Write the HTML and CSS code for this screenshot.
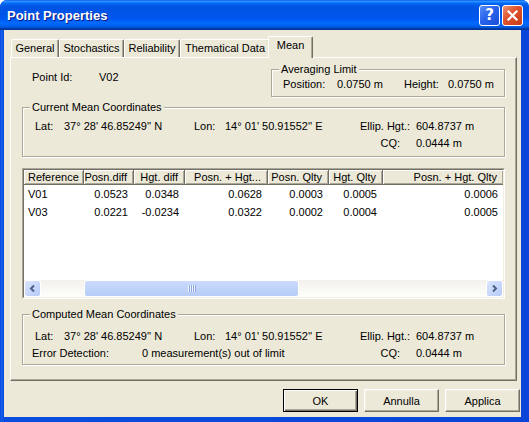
FILE: index.html
```html
<!DOCTYPE html>
<html>
<head>
<meta charset="utf-8">
<title>Point Properties</title>
<link rel="stylesheet" href="styles.css">
</head>
<body>
<div class="window">
  <div class="titlebar">
    <span class="title">Point Properties</span>
    <div class="tbtns">
      <span class="tbtn help">?</span>
      <span class="tbtn close"><svg width="13" height="13" viewBox="0 0 13 13"><path d="M2.5 2.5 L10.5 10.5 M10.5 2.5 L2.5 10.5" stroke="#fff" stroke-width="2.2" stroke-linecap="square"/></svg></span>
    </div>
  </div>
  <div class="client">
    <div class="tabs">
      <div class="tab t-general">General</div>
      <div class="tab t-stoch">Stochastics</div>
      <div class="tab t-rel">Reliability</div>
      <div class="tab t-them">Thematical Data</div>
      <div class="tab active t-mean">Mean</div>
    </div>
    <div class="panel">
      <div class="row1">
        <div class="pointid"><span class="pid-lbl">Point Id:</span><span>V02</span></div>
        <fieldset class="group avg">
          <legend>Averaging Limit</legend>
          <div class="avg-grid"><span>Position:</span><span>0.0750 m</span><span>Height:</span><span>0.0750 m</span></div>
        </fieldset>
      </div>
      <fieldset class="group coords cur">
        <legend>Current Mean Coordinates</legend>
        <div class="rows">
          <div class="crow"><span>Lat:</span><span>37° 28' 46.85249'' N</span><span>Lon:</span><span>14° 01' 50.91552'' E</span><span class="rl">Ellip. Hgt.:</span><span>604.8737 m</span></div>
          <div class="crow"><span class="span4"></span><span class="rl">CQ:</span><span>0.0444 m</span></div>
        </div>
      </fieldset>
      <div class="list">
        <div class="list-inner">
          <div class="lv-head">
            <span>Reference</span><span>Posn.diff</span><span>Hgt. diff</span><span>Posn. + Hgt...</span><span>Posn. Qlty</span><span>Hgt. Qlty</span><span>Posn. + Hgt. Qlty</span>
          </div>
          <div class="lv-body">
            <div class="lv-row"><span>V01</span><span>0.0523</span><span>0.0348</span><span>0.0628</span><span>0.0003</span><span>0.0005</span><span>0.0006</span></div>
            <div class="lv-row"><span>V03</span><span>0.0221</span><span>-0.0234</span><span>0.0322</span><span>0.0002</span><span>0.0004</span><span>0.0005</span></div>
          </div>
          <div class="hscroll">
            <span class="sb-btn"><svg width="9" height="9" viewBox="0 0 9 9"><path d="M6 1.5 L3 4.5 L6 7.5" fill="none" stroke="#4d6185" stroke-width="2"/></svg></span>
            <div class="sb-track"><div class="sb-thumb"><span class="grip"></span></div></div>
            <span class="sb-btn"><svg width="9" height="9" viewBox="0 0 9 9"><path d="M3 1.5 L6 4.5 L3 7.5" fill="none" stroke="#4d6185" stroke-width="2"/></svg></span>
          </div>
        </div>
      </div>
      <fieldset class="group coords comp">
        <legend>Computed Mean Coordinates</legend>
        <div class="rows">
          <div class="crow"><span>Lat:</span><span>37° 28' 46.85249'' N</span><span>Lon:</span><span>14° 01' 50.91552'' E</span><span class="rl">Ellip. Hgt.:</span><span>604.8737 m</span></div>
          <div class="crow"><span class="span4 err"><span class="err-lbl">Error Detection:</span><span>0 measurement(s) out of limit</span></span><span class="rl">CQ:</span><span>0.0444 m</span></div>
        </div>
      </fieldset>
    </div>
    <div class="buttons">
      <button class="btn default">OK</button>
      <button class="btn">Annulla</button>
      <button class="btn">Applica</button>
    </div>
  </div>
</div>
</body>
</html>
```

FILE: styles.css
```css
* { box-sizing: border-box; }
html, body { margin: 0; padding: 0; }
body {
  width: 529px;
  height: 422px;
  overflow: hidden;
  background: #ffffff;
  font-family: "Liberation Sans", Arial, sans-serif;
  font-size: 11px;
  color: #000;
}
.window {
  width: 529px;
  height: 422px;
  display: flex;
  flex-direction: column;
  background: linear-gradient(to right, #0831d9 0, #166aee 1px, #0a4ddf 3px, #0845d8 100%);
  border-radius: 7px 7px 0 0;
  overflow: hidden;
}
.titlebar {
  height: 30px;
  flex: none;
  display: flex;
  align-items: center;
  padding-left: 7px;
  background: linear-gradient(#0058ee 0%, #3593ff 4%, #288eff 6%, #127dff 8%, #036ffc 10%, #0262ee 14%, #0057e5 20%, #0054e3 24%, #0055eb 56%, #005bf5 66%, #026afe 76%, #0062ef 86%, #0052d6 92%, #0040ab 94%, #003092 100%);
}
.title {
  font-family: "Liberation Sans", Arial, sans-serif;
  font-weight: bold;
  font-size: 13px;
  color: #fff;
  text-shadow: 1px 1px 0 #0a1883;
  margin-top: 1px;
}
.tbtns {
  margin-left: auto;
  margin-right: 6px;
  display: flex;
  gap: 2px;
}
.tbtn {
  width: 21px;
  height: 21px;
  border: 1px solid #fff;
  border-radius: 3px;
  display: flex;
  align-items: center;
  justify-content: center;
  color: #fff;
}
.help {
  background: linear-gradient(135deg, #5a8df7 0%, #2863ec 45%, #1a4fd8 100%);
  font-family: "DejaVu Sans", sans-serif;
  font-weight: bold;
  font-size: 15px;
  line-height: 19px;
}
.close {
  background: linear-gradient(135deg, #f0937a 0%, #e0552f 40%, #c63c18 100%);
}
.client {
  flex: 1;
  margin: 0 8px 5px 4px;
  background: #ece9d8;
  padding: 6px 4px 0 6px;
  display: flex;
  flex-direction: column;
}
.tabs {
  display: flex;
  align-items: flex-end;
  height: 21px;
  padding-left: 1px;
  position: relative;
  z-index: 1;
}
.tab {
  height: 18px;
  line-height: 16px;
  text-align: center;
  white-space: nowrap;
  border-top: 1px solid #fff;
  border-left: 1px solid #fff;
  border-right: 1px solid #716f64;
  box-shadow: inset -1px 0 0 #aca899;
  border-radius: 2px 2px 0 0;
  background: #ece9d8;
}
.t-general { width: 48px; }
.t-stoch { width: 65px; }
.t-rel { width: 56px; }
.t-them { width: 90px; }
.tab.active {
  width: 45px;
  height: 22px;
  margin: 0 -2px -1px -2px;
  line-height: 17px;
}
.panel {
  border-top: 1px solid #fff;
  border-left: 1px solid #fff;
  border-right: 1px solid #716f64;
  border-bottom: 1px solid #716f64;
  box-shadow: inset -1px -1px 0 #aca899;
  padding: 5px 11px 15px 11px;
  display: flex;
  flex-direction: column;
}
.row1 {
  display: flex;
  align-items: flex-start;
}
.pointid {
  margin: 8px 0 0 10px;
  display: flex;
  line-height: 13px;
}
.pid-lbl { width: 67px; }
.group {
  border: 1px solid #aca899;
  box-shadow: inset 1px 1px 0 #fff, 1px 1px 0 #fff;
  margin: 0;
  padding: 0;
  min-width: 0;
}
.group legend {
  margin-left: 7px;
  padding: 0 2px;
  line-height: 13px;
  background: #ece9d8;
}
.group.avg {
  margin-left: auto;
  width: 234px;
}
.avg-grid {
  display: grid;
  grid-template-columns: 54px 67px 44px auto;
  padding: 2px 0 5px 11px;
  line-height: 13px;
  white-space: nowrap;
}
.group.cur { margin-top: 4px; }
.cur .rows { padding: 6px 0 6px 12px; }
.group.comp { margin-top: 9px; }
.comp .rows { padding: 9px 0 4px 12px; }
.crow {
  display: grid;
  grid-template-columns: 29px 130px 31px 135px 56px auto;
  line-height: 13px;
  white-space: nowrap;
}
.crow + .crow { margin-top: 4px; }
.span4 { grid-column: 1 / 5; }
.rl { text-align: right; padding-right: 16px; }
.err { display: flex; margin-left: -3px; }
.err-lbl { width: 110px; }
.list {
  margin-top: 11px;
  height: 131px;
  border: 1px solid;
  border-color: #aca899 #fff #fff #aca899;
}
.list-inner {
  height: 100%;
  border: 1px solid;
  border-color: #716f64 #f1efe2 #f1efe2 #716f64;
  background: #fff;
  display: flex;
  flex-direction: column;
  overflow: hidden;
}
.lv-head, .lv-row {
  display: grid;
  grid-template-columns: 60px 50px 51px 83px 61px 54px 121px;
  white-space: nowrap;
}
.lv-head {
  height: 15px;
  flex: none;
  background: #ece9d8;
}
.lv-head span {
  border-right: 1px solid #716f64;
  border-bottom: 1px solid #716f64;
  box-shadow: inset 1px 1px 0 #fff, inset -1px -1px 0 #aca899;
  line-height: 14px;
  text-align: right;
  padding-right: 6px;
  overflow: hidden;
}
.lv-head span:first-child, .lv-row span:first-child {
  text-align: left;
  padding-left: 4px;
}
.lv-body { flex: 1; }
.lv-row { height: 18px; line-height: 18px; }
.lv-row span { text-align: right; padding-right: 6px; }
.hscroll {
  height: 17px;
  flex: none;
  display: flex;
  background: linear-gradient(#f3f1ec, #fefefb);
}
.sb-btn {
  width: 17px;
  height: 17px;
  flex: none;
  border: 1px solid #fff;
  border-radius: 3px;
  background: linear-gradient(135deg, #dbe5fd, #b6cbf8);
  display: flex;
  align-items: center;
  justify-content: center;
}
.sb-track {
  flex: 1;
  padding-left: 43px;
}
.sb-thumb {
  width: 215px;
  height: 17px;
  border: 1px solid #fff;
  border-radius: 3px;
  background: linear-gradient(#cadafd, #b7cdf8);
  display: flex;
  align-items: center;
  justify-content: center;
}
.grip {
  width: 8px;
  height: 7px;
  background: repeating-linear-gradient(to right, #eef3fe 0, #eef3fe 1px, #8ca7e5 1px, #8ca7e5 2px);
}
.buttons {
  display: flex;
  justify-content: flex-end;
  gap: 6px;
  margin: 8px -3px 0 0;
}
.btn {
  width: 75px;
  height: 23px;
  padding: 0;
  font-family: "Liberation Sans", Arial, sans-serif;
  font-size: 11px;
  color: #000;
  background: #ece9d8;
  border: 1px solid;
  border-color: #fff #716f64 #716f64 #fff;
  box-shadow: inset -1px -1px 0 #aca899, inset 1px 1px 0 #f1efe2;
}
.btn.default {
  border-color: #000;
  box-shadow: inset 1px 1px 0 #fff, inset -1px -1px 0 #716f64, inset -2px -2px 0 #aca899;
}
```
